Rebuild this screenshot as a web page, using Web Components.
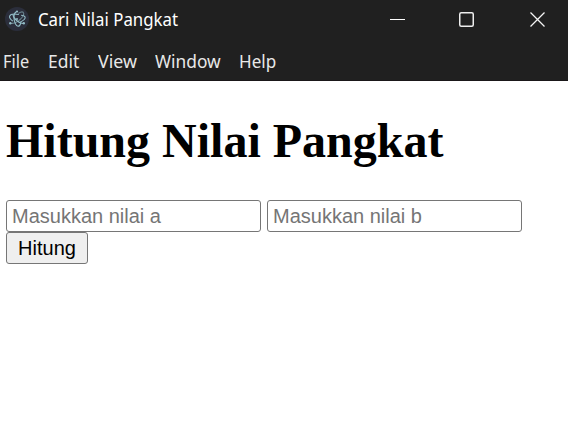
<!DOCTYPE html>
<html lang="id">
<head>
<meta charset="utf-8">
<title>Cari Nilai Pangkat</title>
<style>
html,body{margin:0;height:100%;background:#fff;overflow:hidden}
</style>
</head>
<body>
<app-window></app-window>
<script>
const define = (name, html) => customElements.define(name, class extends HTMLElement {
  connectedCallback() {
    if (!this.shadowRoot) this.attachShadow({mode: 'open'}).innerHTML = html;
  }
});

// A label whose glyphs are condensed to the width given in its "width" attribute.
customElements.define('ui-label', class extends HTMLElement {
  connectedCallback() {
    const width = +this.getAttribute('width');
    const root = this.attachShadow({mode: 'open'});
    root.innerHTML = `<style>
      :host{display:block;width:${width}px;white-space:nowrap}
      span{display:inline-block;transform-origin:0 50%}
    </style><span><slot></slot></span>`;
    const span = root.querySelector('span');
    span.style.transform = `scaleX(${width / span.offsetWidth})`;
  }
});

define('app-logo', `<style>:host{display:block;width:24px;height:24px}svg{display:block}</style>
<svg width="24" height="24" viewBox="0 0 24 24" fill="none" stroke="#93bcc6" stroke-width="1.100" stroke-linecap="round">
  <circle cx="12" cy="12" r="12" fill="#2b2e3b" stroke="none"/>
  <path d="M13.500 7.500C9.500 6.700 5.500 7.200 4.700 8.900c-.6 1.300.6 3.200 2.800 5"/>
  <path d="M16.500 8.300c2 .2 3.300.8 3.600 1.700.5 1.500-1.800 3.700-5.600 5.500"/>
  <path d="M6.300 16.300c2.500.3 6.200-1.200 9.200-4.100 3-2.900 4-5.800 2.700-6.900-1-.8-2.700-.3-4.500 1" stroke-opacity=".6"/>
  <path d="M11 5c-1.200.8-2.200 3.400-2 6.300.3 4.300 2 7.900 4 7.900 1.300 0 2.300-1.300 2.800-3.200"/>
  <path d="M8 7.500c0 3.500 6 9.500 10.500 9"/>
  <g fill="#93bcc6" stroke="none"><circle cx="12" cy="12" r="1"/><circle cx="12" cy="4.500" r="1.100"/><circle cx="5.300" cy="16.300" r="1.200"/><circle cx="18.800" cy="16.300" r="1.200"/></g>
</svg>`);

define('window-controls', `<style>:host{display:flex;gap:54px;padding-top:1px}svg{display:block;width:15px;height:15px}</style>
<svg viewBox="0 0 15 15"><path d="M0 7.500h15" stroke="#fff"/></svg>
<svg viewBox="0 0 15 15" style="margin-right:2px"><rect x=".75" y=".75" width="13.500" height="13.500" rx="1.500" fill="none" stroke="#eee" stroke-width="1.500"/></svg>
<svg viewBox="0 0 15 15"><path d="M.5.500l14 14M14.500.500l-14 14" stroke="#f4f4f4" stroke-width="1.300"/></svg>`);

define('title-bar', `<style>
:host{display:flex;align-items:center;height:38px;padding:0 23px 0 5px;box-sizing:border-box;color:#fff;font:18px/24px "Noto Sans",sans-serif}
ui-label{margin-left:9px}
window-controls{margin-left:auto}
</style><app-logo></app-logo><ui-label width="140"><slot></slot></ui-label><window-controls></window-controls>`);

define('menu-bar', `<style>
:host{display:flex;align-items:center;gap:18.700px;height:43px;padding:2px 0 0 3px;box-sizing:border-box;color:#e8e8e8;font:18px/24px "Noto Sans",sans-serif}
</style><slot></slot>`);

define('power-form', `<style>
:host{display:block;padding:32px 6px 0;font-family:"Liberation Serif",serif}
h1{margin:0;font-size:48px;line-height:56px;font-weight:700;color:#000}
.fields{display:flex;gap:6px;margin-top:31px}
input,button{display:block;box-sizing:border-box;height:32px;margin:0;font:20px/24px "Liberation Sans",Arial,sans-serif;border:1px solid #767676;border-radius:3px}
input{width:255px;padding:1px 5px;background:#fff}
input::placeholder{color:#757575}
button{width:82px;padding:1px 0;background:#efefef;color:#000}
</style>
<h1>Hitung Nilai Pangkat</h1>
<div class="fields"><input placeholder="Masukkan nilai a"><input placeholder="Masukkan nilai b"></div>
<button>Hitung</button>`);

define('app-window', `<style>
:host{display:block;height:100%;background:#fff}
header{height:81px;background:#202020;box-shadow:inset 0 -1px #1a1719}
</style>
<header>
<title-bar>Cari Nilai Pangkat</title-bar>
<menu-bar><ui-label width="26.3">File</ui-label><ui-label width="31">Edit</ui-label><ui-label width="38.5">View</ui-label><ui-label width="65.5">Window</ui-label><ui-label width="37">Help</ui-label></menu-bar>
</header>
<power-form></power-form>`);
</script>
</body>
</html>
